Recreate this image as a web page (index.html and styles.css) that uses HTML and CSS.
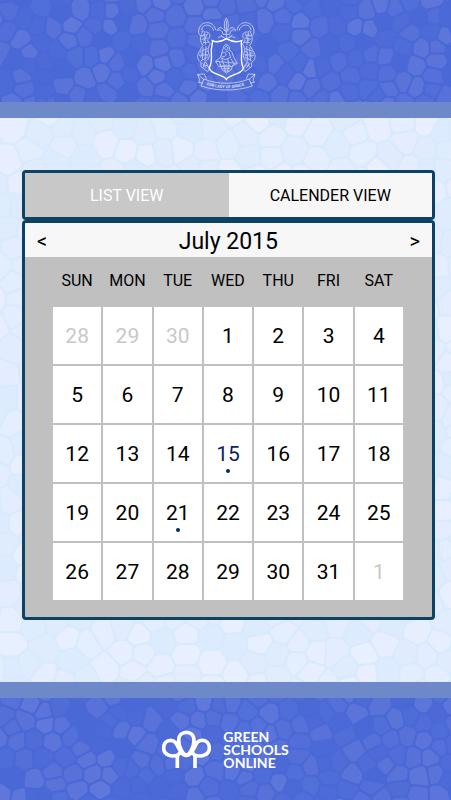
FILE: index.html
```html
<!DOCTYPE html>
<html lang="en">
<head>
    <meta charset="UTF-8">
    <meta name="viewport" content="width=device-width, initial-scale=1.0">
    <title>Calendar</title>
    <link rel="stylesheet" href="styles.css">
</head>
<body>
    <header class="band band-top">
        <svg class="mosaic" data-cell="17" data-seed="7" data-from="74,104,214" data-to="96,120,219" aria-hidden="true"></svg>
        <!-- School crest -->
        <svg class="crest" viewBox="45 35 180 225" role="img" aria-label="Our Lady of Grace">
            <g class="crest-fine">
                <path d="M104 74C98 44 56 44 53 77C51 93 67 96 70 84C72 76 64 73 62 80M98 76C92 54 64 54 62 74"/>
                <path d="M168 74C174 44 216 44 219 77C221 93 205 96 202 84C200 76 208 73 210 80M174 76C180 54 208 54 210 74"/>
                <path d="M65 78C56 96 56 108 66 120L56 136C46 150 49 164 60 171L60 184L80 199C88 190 81 178 72 180M72 80C88 78 92 94 79 104L88 116C82 124 79 132 83 144C88 154 82 164 73 169L82 184"/>
                <path d="M207 78C216 96 216 108 206 120L216 136C226 150 223 164 212 171L212 184L192 199C184 190 191 178 200 180M200 80C184 78 180 94 193 104L184 116C190 124 193 132 189 144C184 154 190 164 199 169L190 184"/>
                <path d="M64 92L76 88M62 102L80 98M66 112L84 110M70 84L74 118M80 84L68 108M57 138L80 130M53 150L82 148M60 166L80 156M66 126L64 164M75 122L72 166M55 144C65 137 67 151 57 156M80 138C70 138 70 152 80 152M65 174L76 188M72 170L66 187"/>
                <path d="M208 92L196 88M210 102L192 98M206 112L188 110M202 84L198 118M192 84L204 108M215 138L192 130M219 150L190 148M212 166L192 156M206 126L208 164M197 122L200 166M217 144C207 137 205 151 215 156M192 138C202 138 202 152 192 152M207 174L196 188M200 170L206 187"/>
                <path d="M136 38C128 52 128 66 136 82C144 66 144 52 136 38M136 46L136 99M132 78C124 63 112 64 108 76C116 70 124 76 126 87M140 78C148 63 160 64 164 76C156 70 148 76 146 87M126 87L146 87M110 98C120 90 129 95 136 102C143 95 152 90 162 98M119 88L129 99M153 88L143 99"/>
                <path d="M127 130C126 115 143 114 145 128C146 137 139 141 134 138M127 130C121 140 124 146 118 156L104 168L113 183L131 184L151 184L169 174L159 158L153 141L145 132M133 124C139 120 143 131 137 134C131 135 130 127 133 124M125 142C133 137 141 150 129 154C122 157 118 149 125 142M144 140L149 156L133 163L118 157M104 168L126 170L146 172L169 174M122 160L130 181M140 160L145 183M150 160L160 177M113 166L121 182"/>
                <path d="M116 176L124 194L136 203L150 194L157 177M119 184C129 178 143 178 153 184M125 190L147 190M129 197L143 197M130 181L133 199M142 181L140 199"/>
            </g>
            <path class="crest-shield" d="M94 106C109 114 124 107 136 100C148 107 163 114 182 106C178 116 184 126 182 143C181 160 179 174 187 187C186 208 145 206 136 222C127 206 86 208 85 187C93 174 92 160 91 143C89 126 96 116 94 106Z"/>
            <g class="crest-fine">
                <path d="M69 221C109 238 164 238 204 221L214 242C166 258 107 258 60 242L69 221ZM68 222L50 207L70 206L76 220M50 207L56 225L52 231L65 233M204 222L222 207L202 206L196 220M222 207L216 225L220 231L208 233"/>
                <path id="motto" class="motto-line" d="M76 238C112 252 160 252 200 237"/>
            </g>
            <text class="crest-motto"><textPath href="#motto">OUR LADY OF GRACE</textPath></text>
        </svg>
    </header>

    <main class="content">
        <svg class="mosaic" data-cell="22" data-seed="21" data-from="220,235,254" data-to="233,239,255" aria-hidden="true"></svg>
        <div class="panel tabs">
            <button type="button" class="tab active">LIST VIEW</button>
            <button type="button" class="tab">CALENDER VIEW</button>
        </div>
        <section class="panel calendar">
            <div class="month">
                <button type="button" class="arrow" aria-label="Previous month">&lt;</button>
                <h1>July 2015</h1>
                <button type="button" class="arrow" aria-label="Next month">&gt;</button>
            </div>
            <table class="days">
                <thead>
                    <tr><th>SUN</th><th>MON</th><th>TUE</th><th>WED</th><th>THU</th><th>FRI</th><th>SAT</th></tr>
                </thead>
                <tbody>
                    <tr><td class="other">28</td><td class="other">29</td><td class="other">30</td><td>1</td><td>2</td><td>3</td><td>4</td></tr>
                    <tr><td>5</td><td>6</td><td>7</td><td>8</td><td>9</td><td>10</td><td>11</td></tr>
                    <tr><td>12</td><td>13</td><td>14</td><td class="today event">15</td><td>16</td><td>17</td><td>18</td></tr>
                    <tr><td>19</td><td>20</td><td class="event">21</td><td>22</td><td>23</td><td>24</td><td>25</td></tr>
                    <tr><td>26</td><td>27</td><td>28</td><td>29</td><td>30</td><td>31</td><td class="other">1</td></tr>
                </tbody>
            </table>
        </section>
    </main>

    <footer class="band band-bottom">
        <svg class="mosaic" data-cell="17" data-seed="35" data-from="74,104,214" data-to="96,120,219" aria-hidden="true"></svg>
        <svg class="logo" viewBox="36 30 147 114" aria-hidden="true">
            <path d="M82 144V106C62 112 41 104 41 84C41 69 50 61 62 61C76 61 80 72 86 85C92 98 97 106 106 106C120 106 132 80 132 60C132 46 122 37 109 37C96 37 86 46 86 60C86 80 98 106 112 106C121 106 126 98 132 85C138 72 142 61 156 61C168 61 178 69 178 84C178 104 156 112 135 106V144M82 108L91 96M135 108L126 96"/>
        </svg>
        <p class="brand">GREEN<br>SCHOOLS<br>ONLINE</p>
    </footer>

    <script src="mosaic.js"></script>
</body>
</html>
```
FILE: styles.css
```css
* { box-sizing: border-box; }
body { margin: 0; min-height: 100vh; display: flex; flex-direction: column; font-family: Roboto, "Liberation Sans", sans-serif; color: #000; }

/* Blue bands */
.band { position: relative; display: flex; justify-content: center; align-items: center; background: #4a69d6; }
.band-top { height: 118px; padding-top: 6px; border-bottom: 16px solid #6d89c9; }
.band-bottom { height: 118px; gap: 12px; border-top: 16px solid #6d89c9; }

/* Stained glass background, filled by mosaic.js */
.mosaic { position: absolute; inset: 0; width: 100%; height: 100%; stroke-width: 2; stroke-linejoin: round; }
.band .mosaic { stroke: #4a69d6; }
.content .mosaic { stroke: #d9eafd; }
.crest, .logo, .brand, .panel { position: relative; }

.crest { width: 60px; height: 75px; fill: none; stroke: #fff; }
.crest-fine { stroke-width: 3; opacity: 0.6; }
.crest-shield { stroke-width: 4; }
.motto-line { stroke: none; }
.crest-motto { font-size: 12px; font-weight: bold; fill: #fff; stroke: none; opacity: 0.8; }
.logo { width: 49px; height: 38px; fill: none; stroke: #fff; stroke-width: 11; }
.brand { margin: 0; font-family: Lato, sans-serif; font-size: 14px; font-weight: bold; line-height: 13px; color: #fff; }

.content { position: relative; flex: 1; padding: 52px 16px 62px 22px; background: #d9eafd; }
.panel { border: 3px solid #0e4263; border-radius: 4px; overflow: hidden; }

/* Tabs */
.tabs { display: flex; height: 50px; background: #f7f7f7; }
.tab { flex: 1; padding: 0; border: 0; background: #f7f7f7; font-family: inherit; font-size: 16px; color: #000; }
.tab.active { background: #c8c8c8; color: #fff; }

/* Calendar */
.calendar { background: #c0c0c0; padding-bottom: 15px; }
.month { display: flex; justify-content: space-between; align-items: center; height: 34px; padding: 2px 12px 0; background: #f7f7f7; }
.month h1 { margin: 0; font-size: 23px; font-weight: normal; }
.arrow { padding: 0; border: 0; background: none; font-family: inherit; font-size: 20px; color: #000; }
.days { width: calc(100% - 53px); margin: 0 27px 0 26px; table-layout: fixed; border-spacing: 2px; }
.days th { height: 46px; padding: 0 0 4px; font-size: 16px; font-weight: normal; }
.days td { position: relative; height: 57px; padding: 0; background: #fff; font-size: 21px; text-align: center; }
.days .other { color: #c8c8c8; }
.days .today { color: #0c2466; }
.days .event::after { content: ""; position: absolute; left: 50%; bottom: 9px; width: 4px; height: 4px; margin-left: -2px; border-radius: 50%; background: #0c2466; }
```
FILE: mosaic.js
```js
// Small seeded generator so the pattern is the same on every load
function makeRandom(seed) {
    return function () {
        seed = (seed * 1664525 + 1013904223) % 4294967296;
        return seed / 4294967296;
    };
}

// Keep the part of a polygon that is closer to a than to b
function clip(poly, a, b) {
    const mx = (a.x + b.x) / 2, my = (a.y + b.y) / 2;
    const dx = b.x - a.x, dy = b.y - a.y;
    const side = p => (p.x - mx) * dx + (p.y - my) * dy;
    const out = [];
    poly.forEach((p, i) => {
        const q = poly[(i + 1) % poly.length];
        const sp = side(p), sq = side(q);
        if (sp <= 0) out.push(p);
        if (sp * sq < 0) {
            const t = sp / (sp - sq);
            out.push({ x: p.x + (q.x - p.x) * t, y: p.y + (q.y - p.y) * t });
        }
    });
    return out;
}

function cellAround(p, points, size) {
    const d = size * 1.2;
    let poly = [
        { x: p.x - d, y: p.y - d }, { x: p.x + d, y: p.y - d },
        { x: p.x + d, y: p.y + d }, { x: p.x - d, y: p.y + d }
    ];
    points.forEach(q => {
        if (q !== p && Math.hypot(q.x - p.x, q.y - p.y) < size * 3) poly = clip(poly, p, q);
    });
    return poly;
}

// Closed path with the corners of the polygon rounded off
function roundedPath(poly) {
    const at = (a, b, t) => `${(a.x + (b.x - a.x) * t).toFixed(1)} ${(a.y + (b.y - a.y) * t).toFixed(1)}`;
    return poly.map((p, i) => {
        const prev = poly[(i + poly.length - 1) % poly.length];
        const next = poly[(i + 1) % poly.length];
        return `${i ? 'L' : 'M'}${at(p, prev, 0.25)}Q${at(p, p, 0)} ${at(p, next, 0.25)}`;
    }).join('') + 'Z';
}

function drawMosaic(svg) {
    const size = Number(svg.dataset.cell);
    const random = makeRandom(Number(svg.dataset.seed));
    const from = svg.dataset.from.split(',').map(Number);
    const to = svg.dataset.to.split(',').map(Number);
    const box = svg.getBoundingClientRect();
    const cols = Math.ceil(box.width / size) + 3;
    const rows = Math.ceil(box.height / size) + 3;
    let points = [];
    for (let r = 0; r < rows; r++) {
        for (let c = 0; c < cols; c++) {
            points.push({
                x: (c - 1 + random() * 1.2) * size,
                y: (r - 1 + random() * 1.2) * size
            });
        }
    }
    // Move each point to the middle of its cell to even the pattern out
    for (let pass = 0; pass < 2; pass++) {
        points = points.map(p => {
            const poly = cellAround(p, points, size);
            return {
                x: poly.reduce((sum, v) => sum + v.x, 0) / poly.length,
                y: poly.reduce((sum, v) => sum + v.y, 0) / poly.length
            };
        });
    }
    svg.innerHTML = points.map(p => {
        const t = random();
        const fill = from.map((v, i) => Math.round(v + (to[i] - v) * t));
        return `<path d="${roundedPath(cellAround(p, points, size))}" fill="rgb(${fill})"/>`;
    }).join('');
}

document.querySelectorAll('.mosaic').forEach(drawMosaic);
```
